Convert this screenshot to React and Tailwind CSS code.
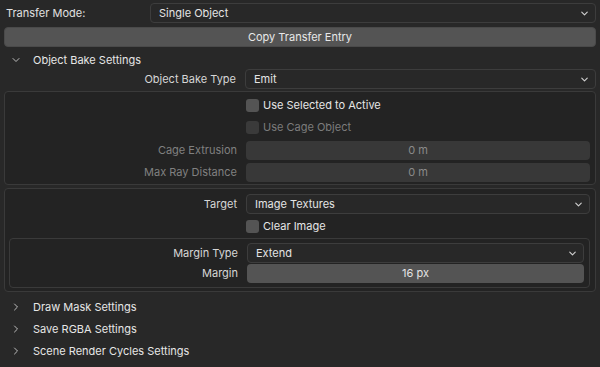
import React from 'react';
import { ChevronDown, ChevronRight } from 'lucide-react';

const Dropdown = ({ value }) => (
  <div className="flex-1 h-[20px] flex items-center justify-between pl-[8px] pr-[5px] bg-[#282828] border border-[#3d3d3d] rounded-[4px] text-[#e4e4e4]">
    <span>{value}</span>
    <ChevronDown className="w-[11px] h-[11px] text-[#cfcfcf]" strokeWidth={2.5} />
  </div>
);

const NumField = ({ value, dim }) => (
  <div className={`flex-1 h-[19px] flex items-center justify-center rounded-[4px] ${dim ? 'bg-[#383838] text-[#8a8a8a]' : 'bg-[#545454] text-[#e4e4e4]'}`}>
    {value}
  </div>
);

const Row = ({ label, dim, children, labelW = 'w-[236px]' }) => (
  <div className="flex items-center h-[22px]">
    <div className={`${labelW} shrink-0 text-right pr-[9px] ${dim ? 'text-[#808080]' : 'text-[#d6d6d6]'}`}>{label}</div>
    {children}
  </div>
);

const Check = ({ label, dim, h = 'h-[22px]' }) => (
  <div className={`flex items-center ${h} pl-[241px]`}>
    <div className={`w-[13px] h-[13px] rounded-[3px] ${dim ? 'bg-[#3a3a3a]' : 'bg-[#545454]'}`} />
    <span className={`ml-[4px] ${dim ? 'text-[#7c7c7c]' : 'text-[#e6e6e6]'}`}>{label}</span>
  </div>
);

const SubHeader = ({ label }) => (
  <div className="flex items-center h-[22px] pl-[10px]">
    <ChevronRight className="w-[12px] h-[12px] text-[#bdbdbd]" strokeWidth={2} />
    <span className="ml-[11px] text-[#e6e6e6]">{label}</span>
  </div>
);

export default function App() {
  return (
    <div className="w-[600px] h-[367px] bg-[#282828] text-[11px] overflow-hidden" style={{ fontFamily: 'Inter, "Noto Sans", sans-serif' }}>
      <div className="pt-[3px] px-[4px]">
        <div className="flex items-center h-[20px]">
          <div className="w-[146px] pl-[2px] text-[#e0e0e0]">Transfer Mode:</div>
          <Dropdown value="Single Object" />
        </div>
        <div className="mt-[4px] h-[20px] flex items-center justify-center bg-[#545454] rounded-[4px] border border-[#4a4a4a] text-[#e8e8e8]">
          Copy Transfer Entry
        </div>
        <div className="flex items-center h-[22px] pt-[4px] pl-[6px]">
          <ChevronDown className="w-[12px] h-[12px] text-[#bdbdbd]" strokeWidth={2} />
          <span className="ml-[11px] text-[#e6e6e6]">Object Bake Settings</span>
        </div>
        <div className="flex items-center h-[20px]">
          <div className="w-[241px] shrink-0 text-right pr-[9px] text-[#d6d6d6]">Object Bake Type</div>
          <Dropdown value="Emit" />
        </div>

        <div className="mt-[2px] border border-[#3a3a3a] rounded-[4px] bg-[#232323] pt-[2px] pb-[1px] pr-[5px]">
          <Check label="Use Selected to Active" />
          <Check label="Use Cage Object" dim h="h-[23px]" />
          <Row label="Cage Extrusion" dim labelW="w-[241px]"><NumField value="0 m" dim /></Row>
          <Row label="Max Ray Distance" dim labelW="w-[241px]"><NumField value="0 m" dim /></Row>
        </div>

        <div className="mt-[3px] border border-[#3a3a3a] rounded-[4px] bg-[#232323] pt-[4px] pb-[3px] pr-[5px] pl-[4px]">
          <Row label="Target" labelW="w-[237px]"><Dropdown value="Image Textures" /></Row>
          <div className="-ml-[4px]"><Check label="Clear Image" /></div>
          <div className="mt-[1px] border border-[#3a3a3a] rounded-[4px] bg-[#232323] pt-[4px] pb-[4px] pr-[5px]">
            <div className="flex items-center h-[20px]">
              <div className="w-[237px] shrink-0 text-right pr-[9px] text-[#d6d6d6]">Margin Type</div>
              <Dropdown value="Extend" />
            </div>
            <div className="flex items-center h-[20px]">
              <div className="w-[237px] shrink-0 text-right pr-[9px] text-[#d6d6d6]">Margin</div>
              <NumField value="16 px" />
            </div>
          </div>
        </div>
      </div>

      <div className="mt-[4px]">
        <SubHeader label="Draw Mask Settings" />
        <SubHeader label="Save RGBA Settings" />
        <SubHeader label="Scene Render Cycles Settings" />
      </div>
    </div>
  );
}
